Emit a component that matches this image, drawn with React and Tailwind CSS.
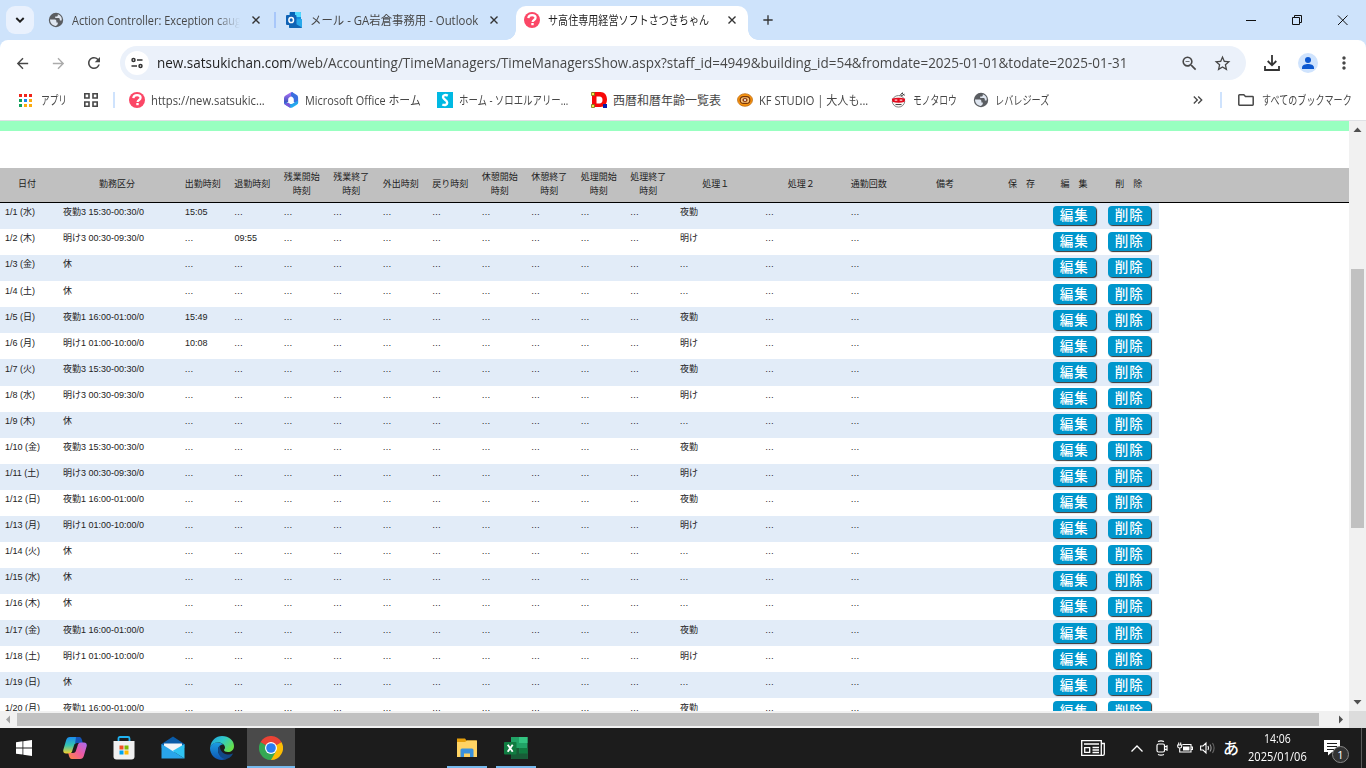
import React, { useLayoutEffect, useRef, useState } from "react";
import {
  MdArrowBack, MdArrowForward, MdRefresh, MdZoomOut, MdStarBorder, MdMoreVert,
  MdAdd, MdKeyboardDoubleArrowRight,
} from "react-icons/md";

// Single-line label condensed or widened to fill a given width.
function Fit({ w, className = "", children }) {
  const ref = useRef(null);
  const [scale, setScale] = useState(1);
  useLayoutEffect(() => {
    const measure = () => {
      if (ref.current) setScale(w / ref.current.offsetWidth);
    };
    measure();
    document.fonts?.ready.then(measure);
  }, [w]);
  return (
    <span className={`flex shrink-0 items-center whitespace-nowrap ${className}`} style={{ width: w }}>
      <span ref={ref} className="inline-block origin-left" style={{ transform: `scaleX(${scale})` }}>
        {children}
      </span>
    </span>
  );
}

/* ---------- brand icons ---------- */
const Globe = () => (
  <svg viewBox="0 0 16 16" className="size-4 shrink-0">
    <circle cx="8" cy="8" r="7.200" fill="#5a5d61" />
    <path d="M2 7.600h4.200c1.500 0 2.200.7 2.200 1.700v1.100h1.400v1.200c0 .9-.8 1.500-1.800 2.300C4.500 13.800 2 11.200 2 7.600z" fill="#dfe6f0" />
    <path d="M9.800 2.300v.9c0 .8-.6 1.300-1.400 1.300H7.200v1.400h3.200c.9 0 1.400.6 1.400 1.400v1.200h1.800c.8-2.600-.9-5.400-3.800-6.200z" fill="#dfe6f0" />
  </svg>
);
const Close = ({ className = "" }) => (
  <svg viewBox="0 0 8 8" className={`size-2 shrink-0 ${className}`} stroke="#333" strokeWidth="1.400">
    <path d="M.5.500l7 7M7.500.500l-7 7" />
  </svg>
);
const Satsuki = () => (
  <svg viewBox="0 0 16 16" className="size-4 shrink-0">
    <circle cx="8" cy="8" r="8" fill="#fb4766" />
    <path d="M4.300 6.200C4.500 4.100 6 3.200 8.100 3.200c2.200 0 3.500 1 3.500 2.600 0 2.200-3 2.200-3 4.200" fill="none" stroke="#fff" strokeWidth="2.200" />
    <rect x="7.300" y="11" width="2.400" height="2.200" fill="#fff" />
  </svg>
);
const Outlook = () => (
  <svg viewBox="0 0 16 16" className="size-4 shrink-0">
    <path d="M4.500 0h9.500a1 1 0 0 1 1 1v8H3.500V1a1 1 0 0 1 1-1z" fill="#1490df" />
    <path d="M9 0h5a1 1 0 0 1 1 1v4H9z" fill="#50d9ff" />
    <path d="M4 0h5v5H4z" fill="#0364b8" />
    <path d="M3 8l13-1v8a1 1 0 0 1-1 1H4a1 1 0 0 1-1-1z" fill="#28a8ea" />
    <path d="M3 8l13 7.500a1 1 0 0 1-1 .5H4a1 1 0 0 1-1-1z" fill="#1066b5" />
    <rect y="3" width="10.500" height="10" rx="1" fill="#0f62b5" />
    <ellipse cx="5.200" cy="8" rx="2.300" ry="2.600" fill="none" stroke="#fff" strokeWidth="1.500" />
  </svg>
);
const AppsGrid = () => (
  <svg viewBox="0 0 13 13" className="size-[13px] shrink-0">
    <path d="M0 0h3v3H0zM5 0h3v3H5zM10 0h3v3h-3z" fill="#f0251c" />
    <path d="M0 5h3v3H0zM0 10h3v3H0z" fill="#12a15c" />
    <path d="M5 5h3v3H5z" fill="#1a86f0" />
    <path d="M10 5h3v3h-3zM5 10h3v3H5zM10 10h3v3h-3z" fill="#fbac10" />
  </svg>
);
const FourSquares = () => (
  <svg viewBox="0 0 14 14" className="size-3.5 shrink-0" fill="none" stroke="#474747" strokeWidth="1.600">
    <path d="M.8.8h4.200v4.200H.8zM9 .8h4.200v4.200H9zM.8 9h4.200v4.200H.8zM9 9h4.200v4.200H9z" />
  </svg>
);
const Office = () => (
  <svg viewBox="0 0 16 16" className="size-4 shrink-0">
    <defs>
      <linearGradient id="of1" x1="0" y1="0" x2="0" y2="1"><stop offset="0" stopColor="#b673f8" /><stop offset="1" stopColor="#2b4fb8" /></linearGradient>
      <linearGradient id="of2" x1="0" y1="0" x2="1" y2="1"><stop offset="0" stopColor="#2f6fe0" /><stop offset="1" stopColor="#1fc8f5" /></linearGradient>
    </defs>
    <path d="M8 .3L2.600 3.400A3 3 0 0 0 1 6v4.600c0 1 .8 1.200 1.600.9l2.600-1.700V7.500c0-1 .4-1.700 1.300-2.200L9.800 3.500V0C9 0 8.500 0 8 .3z" fill="url(#of1)" />
    <path d="M9 0l4.400 2.800A3 3 0 0 1 15.100 5.500v5.500c-.4 1-1.500 1-2.300.5L10.800 10V7.400c0-1-.4-1.700-1.200-2.200L8 4.300V1z" fill="#3b6fe0" />
    <path d="M1 10.500c0 1.300.5 1.900 1.600 2.600l4 2.400a3 3 0 0 0 2.800 0l4-2.400c1-.6 1.600-1.500 1.700-2.600V8.500L9.300 11.700c-.9.5-1.700.5-2.600 0L5.200 10.800z" fill="url(#of2)" />
    <path d="M1 10.500c0 1.300.5 1.900 1.600 2.600l4 2.400 1 .3-1-4.100-1.400-.9c-1.700 1-3.400 1.300-4.200-.3z" fill="#7d55d8" />
  </svg>
);
const Soloel = () => (
  <svg viewBox="0 0 16 16" className="size-4 shrink-0">
    <rect width="16" height="16" fill="#00b9e3" />
    <path d="M10.800 3.600C8.800 2.600 6 2.900 6 5c0 2.600 4.200 2.900 4.200 5.700 0 2-2.400 3-4.900 1.800" fill="none" stroke="#fff" strokeWidth="2.400" />
  </svg>
);
const DIcon = () => (
  <svg viewBox="0 0 16 16" className="size-4 shrink-0">
    <path fillRule="evenodd" d="M1 0h8.500C13.500 0 16 3 16 7.500S13.500 15 9.500 15H1zM5.500 4.500v7h3c2 0 3-1.300 3-3.500s-1-3.500-3-3.500z" fill="#f80808" />
    <path d="M.5.500h3v3h-3zM.5 12.500h3v3h-3z" fill="#f3ee4a" stroke="#77731a" strokeWidth=".8" />
    <rect x="12" y="12" width="4" height="4" fill="#071ba8" />
  </svg>
);
const Kf = () => (
  <svg viewBox="0 0 16 16" className="size-4 shrink-0">
    <ellipse cx="8" cy="8" rx="7.500" ry="6.300" fill="#f6930f" stroke="#b5610c" strokeWidth=".7" />
    <rect x="3.200" y="4.600" width="9.600" height="6.800" rx="3.200" fill="#fbc77a" stroke="#7a3506" strokeWidth="1.200" />
    <ellipse cx="8" cy="8" rx="2.700" ry="2" fill="#8e3d12" />
    <circle cx="8" cy="8" r="1" fill="#fff" />
  </svg>
);
const Monotaro = () => (
  <svg viewBox="0 0 16 16" className="size-4 shrink-0">
    <ellipse cx="7.500" cy="9.300" rx="6.200" ry="5.800" fill="#f8f5f2" stroke="#777" strokeWidth=".9" />
    <path d="M.8 6.800c4.300-1.500 9-1.500 13.400 0l-.6 3c-3.800 1.400-8.400 1.400-12.200 0z" fill="#e30b1e" />
    <path d="M3.700 7.600h2.600v1.200H3.700zM8.700 7.600h2.600v1.200H8.700z" fill="#f8dada" />
    <path d="M4.500 12.500h6M9 3.500l2.500-3M10 4l3.500-1.800M11 1l2.500 2.500" stroke="#444" strokeWidth="1" fill="none" />
  </svg>
);
const Folder = () => (
  <svg viewBox="0 0 16 12" className="h-3 w-4 shrink-0" fill="none" stroke="#474747" strokeWidth="1.500">
    <path d="M.8 10.500V1.500q0-.7.700-.7h4.300L7.500 2.500h7q.7 0 .7.700v7.300q0 .7-.7.7h-13q-.7 0-.7-.7z" />
  </svg>
);

/* ---------- browser chrome ---------- */
const jp = "font-['Open_Sans','Noto_Sans_CJK_JP',sans-serif]";
const V = ({ className = "" }) => <span className={`shrink-0 ${className}`} />;

function TabStrip() {
  return (
    <div className="flex h-10 items-end bg-[#cee3fb] text-[12px] text-[#474747]">
      <div className="mb-1.5 ml-1.5 flex h-7 w-7 items-center justify-center rounded-[9px] bg-[#e9f1fd]">
        <svg viewBox="0 0 10 6" className="h-1.5 w-2.5" fill="none" stroke="#1f1f1f" strokeWidth="1.900"><path d="M1.300 1L5 4.700 8.700 1" /></svg>
      </div>
      <div className="flex h-10 w-[240px] items-center pl-[14px]">
        <Globe />
        <div className="ml-2 w-[168px] overflow-hidden pt-px [mask-image:linear-gradient(to_right,black_85%,transparent)]">
          <Fit w={180}>Action Controller: Exception caught</Fit>
        </div>
        <Close className="ml-[12px]" />
      </div>
      <V className="mb-3 h-4 w-0.5 bg-[#a8c7fa]" />
      <div className="flex h-10 w-[240px] items-center pl-[10px]">
        <Outlook />
        <Fit w={168} className="ml-[8px] pt-px">メール - GA岩倉事務用 - Outlook</Fit>
        <Close className="ml-[12px]" />
      </div>
      <div className="relative flex h-[34px] w-[232px] items-center rounded-t-[10px] bg-white pb-[6px] pl-2 text-[#1f1f1f]">
        <span className="absolute -left-2.5 bottom-0 size-2.5 bg-[radial-gradient(circle_at_0_0,transparent_9.500px,white_10px)]" />
        <span className="absolute -right-2.5 bottom-0 size-2.5 bg-[radial-gradient(circle_at_100%_0,transparent_9.500px,white_10px)]" />
        <Satsuki />
        <Fit w={161} className="ml-[8px] pt-0.5">サ高住専用経営ソフトさつきちゃん</Fit>
        <Close className="ml-[19px]" />
      </div>
      <div className="flex h-10 items-center pl-[12px]"><MdAdd size={16} color="#333" /></div>
      <div className="ml-auto flex h-10 items-center text-black">
        <svg viewBox="0 0 110 20" className="mr-[14px] h-5 w-[110px]" fill="none" stroke="#111" strokeWidth="1">
          <path d="M4 10.500h10M50.500 7.500h7v7h-7zM52.500 7.500v-2h7v7h-2M96 5.500l9.500 9.500M105.500 5.500l-9.500 9.500" />
        </svg>
      </div>
    </div>
  );
}

function Toolbar() {
  return (
    <div className="flex h-[46px] items-center rounded-t-[8px] bg-white text-[#474747]">
      <MdArrowBack size={17} className="ml-[14px] shrink-0" />
      <MdArrowForward size={17} className="ml-[19px] shrink-0 text-[#ababab]" />
      <MdRefresh size={18} className="ml-[18px] shrink-0" />
      <div className="ml-[17px] flex h-[34px] w-[1126px] shrink-0 items-center rounded-full bg-[#ebf1fa]">
        <span className="ml-[5px] flex size-6 shrink-0 items-center justify-center rounded-full bg-white">
          <svg viewBox="0 0 14 12" className="h-3 w-3.5" fill="none" stroke="#333" strokeWidth="1.500">
            <circle cx="3.500" cy="3" r="1.500" /><path d="M7 3h5.500M1.500 9H7" /><circle cx="10.500" cy="9" r="1.500" />
          </svg>
        </span>
        <Fit w={970} className="ml-[8px] text-[14.500px]">
          <span className="text-[#1f1f1f]">new.satsukichan.com</span>
          /web/Accounting/TimeManagers/TimeManagersShow.aspx?staff_id=4949&amp;building_id=54&amp;fromdate=2025-01-01&amp;todate=2025-01-31
        </Fit>
        <MdZoomOut size={19} className="ml-[53px] shrink-0" />
        <MdStarBorder size={19} className="ml-[13.500px] shrink-0" />
      </div>
      <svg viewBox="0 0 16 16" className="ml-[18px] size-4 shrink-0" fill="none" stroke="#333" strokeWidth="1.800">
        <path d="M8 0v10M3.700 6L8 10.300 12.300 6M1 11v4h14v-4" />
      </svg>
      <svg viewBox="0 0 20 20" className="ml-[18px] size-5 shrink-0">
        <circle cx="10" cy="10" r="10" fill="#cfe3fd" />
        <circle cx="10" cy="7" r="3" fill="#0b57d0" />
        <path d="M4 16v-1.500c0-2.400 3.500-3.500 6-3.500s6 1.100 6 3.500V16z" fill="#0b57d0" />
      </svg>
      <MdMoreVert size={20} className="ml-[16px] shrink-0" />
    </div>
  );
}

function Mark({ icon, w, className = "", children }) {
  return (
    <div className={`flex shrink-0 items-center ${className}`}>
      {icon}
      <Fit w={w} className="pt-px">{children}</Fit>
    </div>
  );
}

function Bookmarks() {
  return (
    <div className="flex h-[35px] items-center border-b border-[#dfe1e5] bg-white pb-[6px] text-[12px] text-[#474747]">
      <Mark className="ml-[19px] gap-[9px]" icon={<AppsGrid />} w={26}>アプリ</Mark>
      <span className="ml-[17px]"><FourSquares /></span>
      <V className="ml-[15px] h-4 w-0.5 bg-[#cfe3fd]" />
      <Mark className="ml-[14px] gap-[6px]" icon={<Satsuki />} w={114}>https://new.satsukic...</Mark>
      <Mark className="ml-[18px] gap-[6px]" icon={<Office />} w={116}>Microsoft Office ホーム</Mark>
      <Mark className="ml-[16px] gap-[6px]" icon={<Soloel />} w={109}>ホーム - ソロエルアリー...</Mark>
      <Mark className="ml-[23px] gap-[6px]" icon={<DIcon />} w={108}>西暦和暦年齢一覧表</Mark>
      <Mark className="ml-[16px] gap-[6px]" icon={<Kf />} w={109}>KF STUDIO | 大人も...</Mark>
      <Mark className="ml-[23px] gap-[6px]" icon={<Monotaro />} w={44}>モノタロウ</Mark>
      <Mark className="ml-[16px] gap-[6px]" icon={<Globe />} w={54}>レバレジーズ</Mark>
      <MdKeyboardDoubleArrowRight size={16} className="ml-auto mr-[14px]" />
      <V className="h-4 w-0.5 bg-[#cfe3fd]" />
      <Mark className="ml-[16px] mr-[14px] gap-[8px]" icon={<Folder />} w={90}>すべてのブックマーク</Mark>
    </div>
  );
}

/* ---------- time table ---------- */
const grid =
  "grid grid-cols-[56px_122px_repeat(10,49.500px)_85.500px_85.500px_49.500px_103px_50px_55px_57.500px]";
const heads = [
  "日付", "勤務区分", "出勤時刻", "退勤時刻", "残業開始時刻", "残業終了時刻", "外出時刻", "戻り時刻",
  "休憩開始時刻", "休憩終了時刻", "処理開始時刻", "処理終了時刻", "処理１", "処理２", "通勤回数", "備考",
  "保　存", "編　集", "削　除",
];
const Y3 = "夜勤3 15:30-00:30/0";
const Y1 = "夜勤1 16:00-01:00/0";
const A3 = "明け3 00:30-09:30/0";
const A1 = "明け1 01:00-10:00/0";
const OFF = "休";
const days = [
  ["水", Y3, "15:05"], ["木", A3, "", "09:55"], ["金", OFF], ["土", OFF], ["日", Y1, "15:49"],
  ["月", A1, "10:08"], ["火", Y3], ["水", A3], ["木", OFF], ["金", Y3], ["土", A3], ["日", Y1],
  ["月", A1], ["火", OFF], ["水", OFF], ["木", OFF], ["金", Y1], ["土", A1], ["日", OFF], ["月", Y1],
];

function ActionButton({ children }) {
  return (
    <div className="pl-[6.500px] pt-[2.800px]">
      <button className="flex h-[19.500px] w-[42.500px] items-center justify-center rounded-[4px] bg-[#0096cc] pt-px text-[13.500px] leading-none font-medium tracking-[1px] text-white shadow-[1px_1px_1px_#333]">
        {children}
      </button>
    </div>
  );
}

function Row({ i, day, shift, start, end }) {
  const kind = shift === OFF ? "…" : shift.slice(0, 2);
  const cells = [`1/${i + 1} (${day})`, shift, start || "…", end || "…", ...Array(8).fill("…"), kind, "…", "…", "", ""];
  return (
    <div className={`${grid} h-[26.080px] w-[1159px] shrink-0 ${i % 2 ? "bg-white" : "bg-[#e2ecf8]"}`}>
      {cells.map((c, k) => (
        <div
          key={k}
          className={`pt-[3.300px] leading-[13px] whitespace-nowrap ${k === 0 ? "pl-[5px]" : c === "…" ? "pl-[6.500px]" : "pl-[7px]"}`}
        >
          {c}
        </div>
      ))}
      <ActionButton>編集</ActionButton>
      <ActionButton>削除</ActionButton>
    </div>
  );
}

function Page() {
  return (
    <div className="flex h-[590px] w-[1349px] flex-col overflow-hidden bg-white font-['Liberation_Sans','Noto_Sans_CJK_JP',sans-serif] text-[9px] text-[#222]">
      <div className="h-[10px] shrink-0 bg-[#98ffc0]" />
      <div className="h-[37px] shrink-0" />
      <div className={`${grid} h-[35px] shrink-0 border-b border-black bg-[#c0c0c0]`}>
        {heads.map((h, k) => (
          <div
            key={k}
            className={`flex items-center justify-center pb-[2px] pl-[6px] text-center leading-[14px] ${k === 18 ? "pr-[9px]" : k === 0 ? "pr-[8px]" : "pr-[6px]"}`}
          >
            {h.length === 6 ? <span>{h.slice(0, 4)}<br />{h.slice(4)}</span> : <span className="whitespace-nowrap">{h}</span>}
          </div>
        ))}
      </div>
      {days.map(([day, shift, start, end], i) => (
        <Row key={i} i={i} day={day} shift={shift} start={start} end={end} />
      ))}
    </div>
  );
}

function VScroll() {
  return (
    <div className="flex h-[590px] w-[17px] flex-col items-center bg-[#f1f1f1]">
      <svg viewBox="0 0 17 17" className="size-[17px]"><path d="M4.500 11h8L8.500 6.500z" fill="#505050" /></svg>
      <div className="mt-[131px] h-[259px] w-[13px] bg-[#c1c1c1]" />
      <svg viewBox="0 0 17 17" className="mt-auto size-[17px]"><path d="M4.500 6h8l-4 4.500z" fill="#505050" /></svg>
    </div>
  );
}

function HScroll() {
  return (
    <div className="flex h-[17px] items-center bg-[#f1f1f1]">
      <svg viewBox="0 0 17 17" className="size-[17px]"><path d="M10 4.500v8L6 8.500z" fill="#a3a3a3" /></svg>
      <div className="h-[13px] w-[1302px] bg-[#c1c1c1]" />
      <svg viewBox="0 0 17 17" className="ml-[13px] size-[17px]"><path d="M7 4.500v8l4-4z" fill="#505050" /></svg>
      <div className="h-[17px] w-[17px] bg-[#dcdcdc]" />
    </div>
  );
}

/* ---------- taskbar ---------- */
const Copilot = () => (
  <svg viewBox="0 0 24 24" className="size-6">
    <defs>
      <linearGradient id="cp1" x1="0" y1="0" x2="0" y2="1"><stop offset="0" stopColor="#1b8cf0" /><stop offset=".5" stopColor="#35c4b0" /><stop offset="1" stopColor="#f7d02c" /></linearGradient>
      <linearGradient id="cp2" x1="1" y1="0" x2="0" y2="1"><stop offset="0" stopColor="#a56cf5" /><stop offset=".5" stopColor="#ee5aa0" /><stop offset="1" stopColor="#ff8a3c" /></linearGradient>
    </defs>
    <path d="M7 1h8c2 0 2.500 1.500 3 3l.8 3H14c-2 0-2.600 1-3 2.500L9.500 14c-.5 2-1 3.500-3.500 3.500H3C.5 17.500-.2 15.500.4 13.500L3.200 4C3.800 2 5 1 7 1z" fill="url(#cp1)" />
    <path d="M13 1h3c2 0 2.500 1.500 3 3l.8 3H14c-1 0-1.600.4-2 1z" fill="#1554b8" />
    <path d="M17 23H9c-2 0-2.500-1.500-3-3l-.8-3H10c2 0 2.600-1 3-2.500l1.500-4.500c.5-2 1-3.500 3.500-3.500h3c2.500 0 3.200 2 2.600 4L20.800 20c-.6 2-1.800 3-3.800 3z" fill="url(#cp2)" />
  </svg>
);
const Store = () => (
  <svg viewBox="0 0 24 24" className="size-6">
    <path d="M6.500 6V2.500c0-1 .5-1.500 1.500-1.500h8c1 0 1.500.500 1.500 1.500V6" fill="none" stroke="#20b2f0" strokeWidth="1.800" />
    <path d="M1.500 5h21v15.500a3 3 0 0 1-3 3h-15a3 3 0 0 1-3-3z" fill="#f0f0f0" />
    <path d="M7.500 9.500h4v4h-4z" fill="#f05022" /><path d="M12.500 9.500h4v4h-4z" fill="#7fba00" />
    <path d="M7.500 14.500h4v4h-4z" fill="#00a4ef" /><path d="M12.500 14.500h4v4h-4z" fill="#ffb900" />
  </svg>
);
const Mail = () => (
  <svg viewBox="0 0 24 24" className="size-6">
    <path d="M.5 8L12 .5 23.500 8v4H.5z" fill="#0a5ba8" />
    <path d="M3 7.500h18V12l-9 5-9-5z" fill="#f3f5f8" />
    <path d="M.5 8L23.500 22.500H.5z" fill="#29a5ea" /><path d="M23.500 8v14.500L11.500 15z" fill="#2fc3f2" />
  </svg>
);
const Edge = () => (
  <svg viewBox="0 0 24 24" className="size-6">
    <defs>
      <linearGradient id="ed1" x1="0" y1="0" x2="1" y2=".6"><stop offset="0" stopColor="#1e9fe0" /><stop offset=".5" stopColor="#30c9c9" /><stop offset="1" stopColor="#66e04a" /></linearGradient>
      <linearGradient id="ed2" x1="0" y1="0" x2="0" y2="1"><stop offset="0" stopColor="#1b9de2" /><stop offset="1" stopColor="#0f56b3" /></linearGradient>
    </defs>
    <path d="M.3 11C1 4.500 6 0 12 0c7 0 12 4.500 12 10 0 4-3 6-6 6-2.500 0-4-1-4-2 0-.7 1-1 1-2.500C15 8.500 11.500 6.500 8 6.500S1.500 8 .3 11z" fill="url(#ed1)" />
    <path d="M0 12c.6-3.500 4-5.500 8-5.500 2 0 4 .7 5.300 2C10 8.500 8 11 8 14c0 5 4.500 9 10 8.600C16.500 23.500 14 24 12 24 5 24 0 18.500 0 12z" fill="url(#ed2)" />
    <path d="M8 14c0-2 .8-3.500 2-4.500-.5 3.500 2 9 8 9 1.800 0 3-.3 4.300-1 .4-.2.700.2.500.6C21 21.500 18 23 16 23c-5 0-8-4.500-8-9z" fill="#124887" />
  </svg>
);
const Chrome = () => (
  <svg viewBox="0 0 24 24" className="size-6">
    <path d="M12 12L1.600 6A12 12 0 0 1 22.400 6z" fill="#ea4335" />
    <path d="M12 12L22.400 6A12 12 0 0 1 12 24z" fill="#fbbc04" />
    <path d="M12 12l5.200 3L12 24A12 12 0 0 1 1.600 6z" fill="#34a853" />
    <path d="M1.600 6h20.800L12 12z" fill="#ea4335" />
    <circle cx="12" cy="12" r="6" fill="#fff" /><circle cx="12" cy="12" r="4.800" fill="#2b7df0" />
  </svg>
);
const Explorer = () => (
  <svg viewBox="0 0 24 24" className="size-6">
    <path d="M2 2.500h8l1.500 2h10V8H2z" fill="#e59f0c" />
    <path d="M2 6h8l2-1.500h10V21H2z" fill="#ffd363" />
    <path d="M5.500 21v-7a1.500 1.500 0 0 1 1.500-1.500h10a1.500 1.500 0 0 1 1.500 1.500v7h-3.500v-3.500h-6V21z" fill="#3a91dc" />
  </svg>
);
const Excel = () => (
  <svg viewBox="0 0 24 24" className="size-6">
    <path d="M7 1h16.500v22H8a1 1 0 0 1-1-1z" fill="#21a366" />
    <path d="M15 1h8.500v6H15z" fill="#33c481" /><path d="M7 12h8.500v6H7z" fill="#185c37" />
    <path d="M15.500 12h8v6h-8z" fill="#107c41" /><path d="M7 17.500h16.500V23H8a1 1 0 0 1-1-1z" fill="#185c37" />
    <rect y="6" width="12.500" height="12.500" rx="1" fill="#107c41" />
    <path d="M3.700 8.700l5 7M8.700 8.700l-5 7" stroke="#fff" strokeWidth="1.900" />
  </svg>
);

function Slot({ children, className = "w-12" }) {
  return <div className={`flex h-10 shrink-0 items-center justify-center ${className}`}>{children}</div>;
}

function Taskbar() {
  return (
    <div className="flex h-10 items-center bg-[#1c1c1c] text-white">
      <Slot>
        <svg viewBox="0 0 16 16" className="size-4" fill="#fff"><path d="M0 2.200L6.500 1.300v6.200H0zM7.300 1.200L16 0v7.500H7.300zM0 8.400h6.500v6.200L0 13.700zM7.300 8.400H16V16l-8.700-1.200z" /></svg>
      </Slot>
      <Slot className="ml-[3px] w-12"><Copilot /></Slot>
      <Slot className="ml-px w-12"><Store /></Slot>
      <Slot className="ml-px w-12"><Mail /></Slot>
      <Slot className="ml-px w-12"><Edge /></Slot>
      <Slot className="ml-px w-12 border-b-2 border-[#76b9ed] bg-[#4a4a4a] pt-0.5"><Chrome /></Slot>
      <Slot className="ml-[152px] w-10 border-b-2 border-[#76b9ed] pt-0.5"><Explorer /></Slot>
      <Slot className="ml-[9px] w-10 border-b-2 border-[#76b9ed] pt-0.5"><Excel /></Slot>
      <svg viewBox="0 0 24 16" className="ml-auto h-4 w-6" fill="none" stroke="#fff" strokeWidth="1.300">
        <path d="M.7.7h19.600v14.600H.7zM20.300 3.500h3v10.500q0 1.300-1.500 1.300h-2M3 4h15M11.500 7.500H18M11.500 10H18M11.500 12.500H18M3.700 7.700h5v4.600h-5z" />
      </svg>
      <svg viewBox="0 0 12 7" className="ml-[26px] h-[7px] w-3" fill="none" stroke="#fff" strokeWidth="1.300"><path d="M.5 6.500L6 1l5.500 5.500" /></svg>
      <svg viewBox="0 0 12 16" className="ml-[13px] h-4 w-3" fill="none" stroke="#fff" strokeWidth="1.200">
        <rect x="1" y="4" width="7.500" height="8" rx="1.500" /><path d="M8.500 7l2.500-1v4L8.500 9M2 1.500Q5 .2 8 1.500M2 14.500q3 1.300 6 0" />
      </svg>
      <svg viewBox="0 0 16 12" className="ml-[9px] h-3 w-4" fill="none" stroke="#fff" strokeWidth="1.100">
        <path d="M5.500 2.500h8.500v7.500H4.500M14 5h1.500v2.500H14M.7 3h4v1.500q0 1.500-2 1.500t-2-1.500zM1.700.5v2.500M3.700.5v2.500M2.700 6v4h1.800" /><path d="M6 4.500h6.500v4H6z" fill="#fff" stroke="none" />
      </svg>
      <svg viewBox="0 0 16 14" className="ml-[7px] h-3.5 w-4" fill="none" stroke="#fff" strokeWidth="1.100">
        <path d="M.6 5h2.400L6 2v10L3 9H.6zM8 5q1 2 0 4" /><path d="M10 3.500q2.200 3.500 0 7" stroke="#999" /><path d="M12.500 2q3.200 5 0 10" stroke="#666" />
      </svg>
      <span className="ml-[7px] w-[16px] text-[16px] leading-none font-medium">あ</span>
      <div className="ml-[6px] flex w-[64px] flex-col items-center text-[12px] leading-[18px]">
        <Fit w={27}>14:06</Fit>
        <Fit w={59}>2025/01/06</Fit>
      </div>
      <div className="relative ml-[15px] mr-[13px] h-5 w-6 pt-0.5">
        <svg viewBox="0 0 16 16" className="size-4"><path d="M0 0h16v12H8l-4 3.500V12H0z" fill="#fff" /><path d="M3 3.500h10M3 6.500h10M3 9.500h7" stroke="#1c1c1c" strokeWidth="1.100" /></svg>
        <span className="absolute left-[8px] top-[8px] flex size-[17px] items-center justify-center rounded-full border border-[#888] bg-[#333] text-[11px] leading-none">1</span>
      </div>
      <span className="h-10 w-px bg-[#5a5a5a]" /><span className="h-10 w-[4px]" />
    </div>
  );
}

export default function App() {
  return (
    <div className={`flex h-[768px] w-[1366px] flex-col overflow-hidden bg-[#cee3fb] ${jp}`}>
      <TabStrip />
      <Toolbar />
      <Bookmarks />
      <div className="flex h-[590px]">
        <Page />
        <VScroll />
      </div>
      <HScroll />
      <Taskbar />
    </div>
  );
}
